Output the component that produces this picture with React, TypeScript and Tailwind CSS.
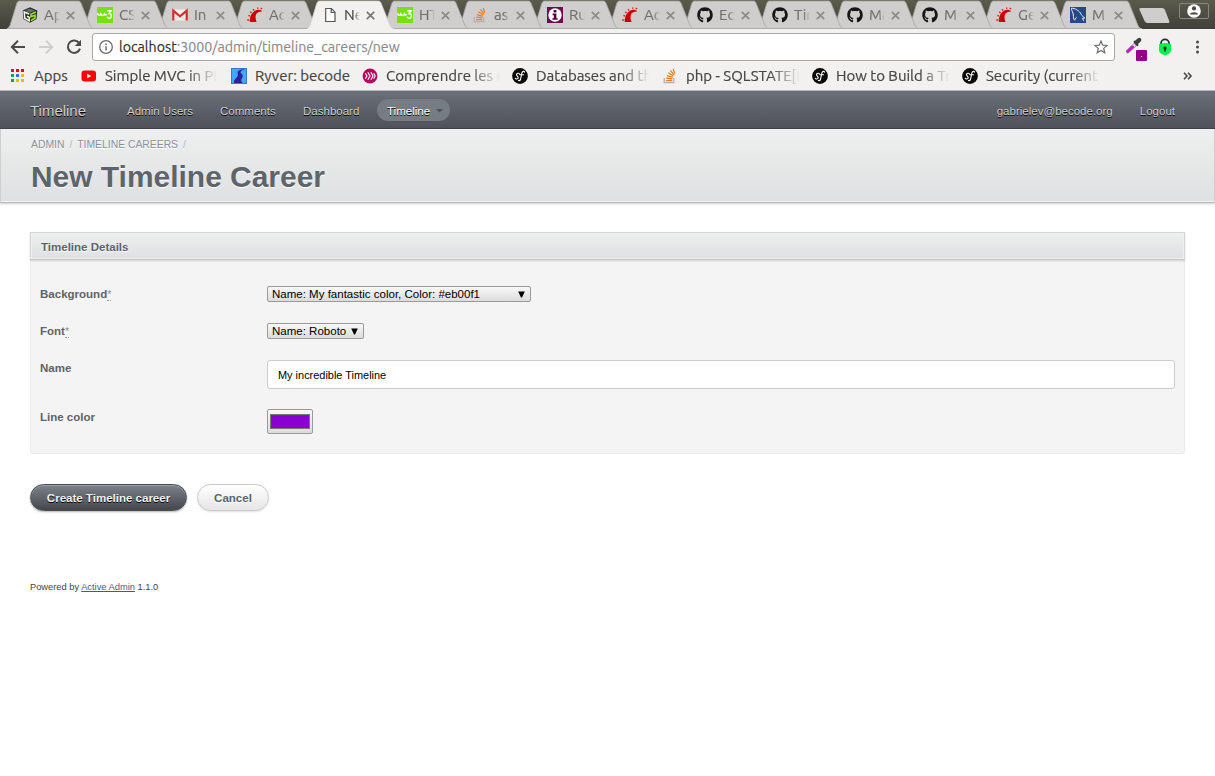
import type { ReactNode } from "react";
import { FaGithub } from "react-icons/fa";

const CHROME_FONT = "font-['Ubuntu','Noto_Sans',sans-serif]";

/* ---------- favicons ---------- */

function CubeIcon() {
  return (
    <svg width="16" height="16" viewBox="0 0 16 16">
      <path d="M8 0.3 15.3 3.6 14.6 12 8 15.8 1.4 12 0.7 3.6Z" fill="#2b2b2b" />
      <path d="M8 1.5 13 3.7 8 5.8 3 3.7Z" fill="#6b6b6b" />
      <path d="M7.2 7 2.2 5 2.8 11.2 7.2 13.8V10.2L5 9.3" fill="none" stroke="#f4f4f4" strokeWidth="1.5" />
      <path d="M13.8 5 9 7.2V9.8L13 8.2V11L8.8 13.6" fill="none" stroke="#9be021" strokeWidth="1.6" />
    </svg>
  );
}

function W3Icon() {
  return (
    <svg width="16" height="16" viewBox="0 0 16 16">
      <rect width="16" height="16" fill="#77e010" />
      <path d="M0.6 6.2C1 9 3 9 3.8 6.9 4.6 9 6.8 9 7.4 7 8 8.2 8.8 8.2 9.6 7.2" fill="none" stroke="#fff" strokeWidth="1.4" />
      <path d="M10.2 3.7H14L12 6.6C14.8 6.4 15 9.8 13.4 10.8 12.2 11.6 10.6 11.2 10 9.8" fill="none" stroke="#fff" strokeWidth="1.4" />
    </svg>
  );
}

function GmailIcon() {
  return (
    <svg width="16" height="16" viewBox="0 0 16 16">
      <rect x="1" y="2.5" width="14" height="11" fill="#eee" />
      <path d="M1.3 13.5V3.6L8 9.3 14.7 3.6V13.5" fill="none" stroke="#d3302a" strokeWidth="2.2" />
      <path d="M3 13.5 6.5 9.2M13 13.5 9.5 9.2" stroke="#ccc" strokeWidth="0.8" />
    </svg>
  );
}

function RailsIcon() {
  return (
    <svg width="16" height="16" viewBox="0 0 16 16">
      <path d="M2.8 15C2.4 9.5 5.4 3.4 11 2.8 13 2.6 14.4 3.2 15.2 4.6 11.6 4.6 9.4 5.8 8.7 8.4 8.3 10.4 8.6 12.6 9.6 15Z" fill="#cc0000" />
      <path d="M10 1.2H11.4M13.6 1 15.2 1.8M6 2.2 7.2 3.6M3.2 4.8 4.6 5.9M1.4 8.4 3 9.1M0.2 13H2.2" stroke="#d42020" strokeWidth="1.3" />
    </svg>
  );
}

function PageIcon() {
  return (
    <svg width="16" height="16" viewBox="0 0 16 16">
      <path d="M3.7 1.5H9.4L13 5.2V14.5H3.7ZM9.2 1.8V5.5H12.8" fill="#fff" stroke="#555" strokeWidth="1.2" />
    </svg>
  );
}

function StackIcon() {
  return (
    <svg width="16" height="16" viewBox="0 0 16 16">
      <path d="M2.2 10V14.6H11.8V10" fill="none" stroke="#b3b0ad" strokeWidth="1.3" />
      <path d="M4 12.6H10.2M4.2 10.2 10.3 10.9M4.9 7.6 10.7 9.4M6.3 4.8 11.2 8M8.4 2.4 12 6.8M11.2 1 12.7 5.6" stroke="#f07d1c" strokeWidth="1.3" />
    </svg>
  );
}

function InfoSquareIcon() {
  return (
    <svg width="16" height="16" viewBox="0 0 16 16">
      <rect width="16" height="16" fill="#6d0a54" />
      <circle cx="8" cy="8" r="6.7" fill="#fff" />
      <path d="M5.6 6.6H9.4V11.2H10.6V12.8H5.4V11.2H6.8V8.2H5.6ZM6.6 3H9.4V5.6H6.6Z" fill="#4a0638" />
    </svg>
  );
}

function GithubIcon() {
  return <FaGithub size={16} color="#161616" />;
}

function DolphinIcon() {
  return (
    <svg width="16" height="16" viewBox="0 0 16 16">
      <rect width="16" height="16" fill="#264788" />
      <path d="M1.5 1.2C4.5 1 9.5 3.5 11.2 7.4 11.8 9 13.5 9.8 14.8 11L12.3 11.4 14 14M1.5 1.2C1.2 3.4 3.2 5 3.3 8 3.4 10 3.6 12.4 4.8 13.2 5.4 12 5.6 10.6 6.6 10.4" fill="none" stroke="#e8eef8" strokeWidth="1" />
    </svg>
  );
}

function YoutubeIcon() {
  return (
    <svg width="16" height="16" viewBox="0 0 16 16">
      <rect x="0.5" y="2.5" width="14.5" height="11" rx="3" fill="#f00" />
      <path d="M6.2 5.8 10.2 8 6.2 10.2Z" fill="#fff" />
    </svg>
  );
}

function RyverIcon() {
  return (
    <svg width="16" height="16" viewBox="0 0 16 16">
      <rect x="0.5" y="0.5" width="15" height="15" fill="#41a8f8" stroke="#3b78c8" strokeWidth="1" />
      <path d="M14 1.2C10 1 6.4 2.4 6.6 4.6 6.8 6.8 7.4 8 4.8 10.4 3 12 2.6 13.6 3.2 15H11.8C9.6 13 10 11.8 11.2 10 12.6 7.6 11.4 6.4 10 5.2 8.6 3.8 10.6 2.2 14 1.2Z" fill="#2f1fa0" />
    </svg>
  );
}

function MagentaIcon() {
  return (
    <svg width="16" height="16" viewBox="0 0 16 16">
      <circle cx="8" cy="8" r="7.4" fill="#b5075f" />
      <path d="M3.2 5.2 5 8 3.2 10.8M5.8 4.2 8 8 5.8 11.8M8.8 4.2 11 8 8.8 11.8M11.6 5.2 13.2 8 11.6 10.8" fill="none" stroke="#fff" strokeWidth="1.1" />
    </svg>
  );
}

function SymfonyIcon() {
  return (
    <svg width="16" height="16" viewBox="0 0 16 16">
      <circle cx="8" cy="8" r="7.9" fill="#0b0b0b" />
      <path d="M7.4 6.1C7.4 4.8 4.6 4.8 4.5 6.6 4.5 8 6.4 8.2 6.2 9.8 6 11.4 3.6 11.4 3.4 10.2M12.6 4.2C12.4 2.8 10.4 3 9.8 5.2L8.6 11C8.2 12.6 7 13 6.4 12.4M8.2 6.8H11.6" fill="none" stroke="#fff" strokeWidth="1.1" strokeLinecap="round" />
    </svg>
  );
}

function AppsIcon() {
  const colors = ["#f00", "#f00", "#f00", "#1a9c4c", "#4666f6", "#f3b800", "#1a9c4c", "#f3b800", "#f3b800"];
  return (
    <svg width="14" height="14" viewBox="0 0 14 14">
      {colors.map((c, i) => (
        <rect key={i} x={1 + (i % 3) * 5} y={Math.floor(i / 3) * 5} width="3" height="3" fill={c} />
      ))}
    </svg>
  );
}

/* ---------- browser chrome ---------- */

type TabInfo = { title: string; icon: () => ReactNode; active?: boolean };

const tabs: TabInfo[] = [
  { title: "Ap", icon: CubeIcon },
  { title: "CS", icon: W3Icon },
  { title: "In", icon: GmailIcon },
  { title: "Ac", icon: RailsIcon },
  { title: "Ne", icon: PageIcon, active: true },
  { title: "HT", icon: W3Icon },
  { title: "as", icon: StackIcon },
  { title: "Ru", icon: InfoSquareIcon },
  { title: "Ac", icon: RailsIcon },
  { title: "Ec", icon: GithubIcon },
  { title: "Tin", icon: GithubIcon },
  { title: "Ma", icon: GithubIcon },
  { title: "M", icon: GithubIcon },
  { title: "Ge", icon: RailsIcon },
  { title: "M", icon: DolphinIcon },
];

function Tab({ tab, index }: { tab: TabInfo; index: number }) {
  const Icon = tab.icon;
  return (
    <div
      className={`relative flex h-[29px] shrink-0 items-center pl-[15px] ${index < 12 ? "w-[75px]" : "w-[74px]"}`}
      style={{ zIndex: tab.active ? 30 : 20 - index }}
    >
      <svg className="absolute top-0 left-0" width="88" height="29" viewBox="0 0 88 29">
        <path
          d="M0 29C1.5 28 2.5 26.5 3.2 25L9.6 4C10.4 2 11 1 12.5 1H71.5C73 1 73.6 2 74.4 4L82.8 25C83.6 27 85 28.4 87 29Z"
          fill={tab.active ? "#f2f1f0" : "#d0cecd"}
        />
        <path
          d="M0 28.8C1.5 28 2.5 26.5 3.2 25L9.6 4C10.4 2 11 1 12.5 1H71.5C73 1 73.6 2 74.4 4L82.8 25C83.6 27 85 28.4 87 28.8"
          fill="none"
          stroke={tab.active ? "#d5d4d0" : "#a5a4a0"}
          strokeWidth="0.8"
        />
        {!tab.active && <path d="M0 28.5H87" stroke="#adacaa" />}
      </svg>
      <span className="relative mt-px flex h-4 w-4">
        <Icon />
      </span>
      <span
        className={`relative ml-[6px] w-[16px] overflow-hidden text-[15px] leading-5 whitespace-nowrap [-webkit-text-stroke:0.2px] [mask-image:linear-gradient(to_right,#000_60%,transparent)] ${
          tab.active ? "text-[#4c4c4c]" : "text-[#707070]"
        }`}
      >
        {tab.title}
      </span>
      <svg className="relative mt-px ml-[6px] shrink-0" width="9" height="9" viewBox="0 0 9 9">
        <path d="M0.8 0.8 8.2 8.2M8.2 0.8 0.8 8.2" stroke={tab.active ? "#777" : "#8b8b8b"} strokeWidth="1.7" />
      </svg>
    </div>
  );
}

function TabStrip() {
  return (
    <div className="flex h-[29px] bg-linear-to-b from-[#5b5b4d] to-[#403f39] pl-[7px]">
      {tabs.map((t, i) => (
        <Tab key={i} tab={t} index={i} />
      ))}
      <svg className="ml-[8px] shrink-0" width="36" height="29" viewBox="0 0 36 29">
        <path d="M3.5 8H25Q27 8 28 10L32.4 21.5Q32.8 23 31 23H10.5Q8.5 23 7.6 21L2.4 9.5Q2 8 3.5 8Z" fill="#d0cecd" />
      </svg>
      <div className="mt-[3px] ml-[6px] flex h-4 w-[30px] items-center justify-center rounded-[2px] border border-[#888880]">
        <svg width="14" height="14" viewBox="0 0 14 14">
          <circle cx="7" cy="7" r="6.8" fill="#fff" />
          <circle cx="7" cy="4.4" r="2.1" fill="#4a493f" />
          <path d="M3 10.4C3.2 7.4 10.8 7.4 11 10.4Z" fill="#4a493f" />
        </svg>
      </div>
    </div>
  );
}

function Toolbar() {
  return (
    <div className="flex h-[35px] items-center">
      <svg className="ml-[10px]" width="16" height="16" viewBox="0 0 16 16">
        <path d="M15 8H2M8 1.8 1.8 8 8 14.2" fill="none" stroke="#4b4b4b" strokeWidth="2" />
      </svg>
      <svg className="ml-[12px]" width="16" height="16" viewBox="0 0 16 16">
        <path d="M1 8H14M8 1.8 14.2 8 8 14.2" fill="none" stroke="#cfcecd" strokeWidth="2" />
      </svg>
      <svg className="ml-[12px]" width="16" height="16" viewBox="0 0 16 16">
        <path d="M13.3 4.3A6.2 6.2 0 1 0 14 9.6" fill="none" stroke="#4b4b4b" strokeWidth="2" />
        <path d="M15 0.8V7H8.8Z" fill="#4b4b4b" />
      </svg>
      <div className="ml-[10px] flex h-7 w-[1023px] items-center rounded-[3px] border border-[#a9a9a9] bg-white pl-[6px]">
        <svg width="14" height="14" viewBox="0 0 14 14">
          <circle cx="7" cy="7" r="6.3" fill="none" stroke="#6b6b6b" strokeWidth="1.3" />
          <path d="M7 6.2V10.5M7 3.4V4.9" stroke="#6b6b6b" strokeWidth="1.5" />
        </svg>
        <span className="ml-[6px] text-[14.2px] leading-5 text-[#8a8a8a] [-webkit-text-stroke:0.15px]">
          <span className="text-[#2c2c2c]">localhost</span>:3000/admin/timeline_careers/new
        </span>
        <svg className="mr-[6px] ml-auto" width="14" height="14" viewBox="0 0 14 14">
          <path d="M7 1 8.7 5.2 13.2 5.5 9.7 8.4 10.8 12.8 7 10.4 3.2 12.8 4.3 8.4 0.8 5.5 5.3 5.2Z" fill="none" stroke="#6e6e6e" strokeWidth="1.2" />
        </svg>
      </div>
      <div className="relative ml-[11px] h-6 w-[21px]">
        <svg width="21" height="24" viewBox="0 0 21 24">
          <path d="M1.8 16.4 9.8 9" stroke="#8a8a8a" strokeWidth="3.8" strokeLinecap="round" />
          <path d="M1.9 16.2 9 9.6" stroke="#eedff0" strokeWidth="2.4" />
          <path d="M1.9 16.2 6.6 11.9" stroke="#d012c8" strokeWidth="2.8" strokeLinecap="round" />
          <path d="M8 6.2 12 10.6" stroke="#333" strokeWidth="2" />
          <path d="M10.8 7.2 13.2 5" stroke="#3c4040" strokeWidth="4.4" strokeLinecap="round" />
        </svg>
        <div className="absolute top-[15px] left-[10px] h-[11px] w-[11px] rounded-[1px] bg-[#94008c]" />
        <div className="absolute top-[21px] left-[15px] h-px w-px bg-white" />
      </div>
      <svg className="ml-[10px]" width="16" height="18" viewBox="0 0 16 18">
        <path d="M4 7V5.4A4 4 0 0 1 12 5.4V7" fill="none" stroke="#27303a" strokeWidth="1.8" />
        <path d="M2 6.2Q8 4 14 6.2V13.1Q12.6 16.2 8 17.4 3.4 16.2 2 13.1Z" fill="#08f04c" />
        <circle cx="8" cy="10" r="1.6" fill="#102818" />
        <path d="M7.3 10.6H8.7V13.6H7.3Z" fill="#102818" />
      </svg>
      <svg className="ml-[22px]" width="5" height="14" viewBox="0 0 5 14">
        <circle cx="2.5" cy="2" r="1.5" fill="#4b4b4b" />
        <circle cx="2.5" cy="7" r="1.5" fill="#4b4b4b" />
        <circle cx="2.5" cy="12" r="1.5" fill="#4b4b4b" />
      </svg>
    </div>
  );
}

const bookmarks: { title: string; icon: () => ReactNode; box: string; text: string; fade?: boolean }[] = [
  { title: "Simple MVC in PHP", icon: YoutubeIcon, box: "w-[150px]", text: "ml-2 w-[112px]", fade: true },
  { title: "Ryver: becode", icon: RyverIcon, box: "w-[131px]", text: "ml-2 w-[100px]" },
  { title: "Comprendre les no", icon: MagentaIcon, box: "w-[150px]", text: "ml-2 w-[114px]", fade: true },
  { title: "Databases and the", icon: SymfonyIcon, box: "w-[150px]", text: "ml-2 w-[114px]", fade: true },
  { title: "php - SQLSTATE[HY", icon: StackIcon, box: "w-[150px]", text: "ml-2 w-[114px]", fade: true },
  { title: "How to Build a Tra", icon: SymfonyIcon, box: "w-[150px]", text: "ml-2 w-[114px]", fade: true },
  { title: "Security (current)", icon: SymfonyIcon, box: "w-[150px]", text: "ml-2 w-[114px]", fade: true },
];

function BookmarkBar() {
  return (
    <div className="flex h-[27px] items-center border-b border-[#b4b4b4] pb-[2px] text-[15px] leading-5 text-[#454545] [-webkit-text-stroke:0.2px]">
      <span className="ml-[10px] flex h-[14px]">
        <AppsIcon />
      </span>
      <span className="ml-[10px] w-[47px]">Apps</span>
      {bookmarks.map((b, i) => {
        const Icon = b.icon;
        return (
          <div key={i} className={`flex shrink-0 items-center ${b.box}`}>
            <Icon />
            <span
              className={`overflow-hidden whitespace-nowrap ${b.text} ${
                b.fade ? "[mask-image:linear-gradient(to_right,#000_74%,transparent)]" : ""
              }`}
            >
              {b.title}
            </span>
          </div>
        );
      })}
      <svg className="ml-[71px]" width="10" height="8" viewBox="0 0 10 8">
        <path d="M1 0.8 4 4 1 7.2M5 0.8 8 4 5 7.2" fill="none" stroke="#444" strokeWidth="1.6" />
      </svg>
    </div>
  );
}

/* ---------- admin page ---------- */

function AdminNav() {
  return (
    <nav className="flex h-[38px] items-center border-b border-[#3f4247] bg-linear-to-b from-[#6b6f78] to-[#4f525a] pt-[2px] pl-[30px] text-[#cdcfd1] [text-shadow:0_1px_0_#000]">
      <span className="w-[97px] text-[14.98px]">Timeline</span>
      <span className="w-[93px]">Admin Users</span>
      <span className="w-[83px]">Comments</span>
      <span className="w-[74px]">Dashboard</span>
      <span className="-mt-px flex h-[22px] w-[73px] items-center rounded-full bg-[#757c84] pt-px pl-[10px] text-white">
        Timeline
        <svg className="ml-[6px]" width="7" height="4" viewBox="0 0 7 4">
          <path d="M0 0H7L3.5 3.5Z" fill="#4d5158" />
        </svg>
      </span>
      <span className="ml-auto">gabrielev@becode.org</span>
      <span className="mr-[40px] ml-[27px]">Logout</span>
    </nav>
  );
}

function TitleBar() {
  return (
    <header className="h-[74px] border border-t-0 border-[#cfcfcf] border-b-[#bababa] bg-linear-to-b from-[#efefef] via-[#e6e8e8] to-[#dfe0e2] px-[30px] pt-[9px] shadow-[0_1px_2px_rgba(0,0,0,0.2),inset_0_-1px_0_#f2f2f2]">
      <div className="flex gap-[5px] text-[10.37px] leading-[14px] text-[#8a90a0] [text-shadow:0_1px_0_#fff]">
        <span>ADMIN</span>
        <span className="text-[#aab2ba]">/</span>
        <span>TIMELINE CAREERS</span>
        <span className="text-[#aab2ba]">/</span>
      </div>
      <h1 className="mt-[7px] text-[29.95px] leading-9 font-bold text-[#5e6469] [text-shadow:0_1px_0_#fff]">New Timeline Career</h1>
    </header>
  );
}

function Row({ label, required, height, children }: { label: string; required?: boolean; height: string; children: ReactNode }) {
  return (
    <div className={`flex items-start ${height}`}>
      <label className="w-[227px] leading-4 font-bold text-[#5e6469]">
        {label}
        {required && (
          <abbr className="border-b border-dotted border-[#999] text-[10.4px] leading-none font-normal text-[#8c8c8c] no-underline">*</abbr>
        )}
      </label>
      {children}
    </div>
  );
}

function Select({ value, width }: { value: string; width: string }) {
  return (
    <div
      className={`flex h-4 items-center justify-between rounded-[2px] border border-[#9a9a9a] bg-linear-to-b from-[#f8f8f8] to-[#dcdcdc] pr-[5px] pl-1 whitespace-nowrap text-black ${width}`}
    >
      {value}
      <svg width="7" height="7" viewBox="0 0 7 7">
        <path d="M0.2 0.5H6.8L4 6.5H3Z" fill="#000" />
      </svg>
    </div>
  );
}

function TimelineForm() {
  return (
    <main className="px-[30px] pt-[29px]">
      <section className="rounded-b-[4px] bg-[#f4f4f4] shadow-[inset_0_0_0_1px_#ebebeb]">
        <h3 className="flex h-[28px] items-center border border-[#d6d6d6] border-b-[#c4c4c4] bg-linear-to-b from-[#efefef] via-[#e6e8e8] to-[#dfe0e2] pt-px pl-[10px] font-bold text-[#5e6469] shadow-[0_1px_2px_rgba(0,0,0,0.15),inset_0_0_0_1px_#f0f0f0] [text-shadow:0_1px_0_#fff]">
          Timeline Details
        </h3>
        <div className="h-[194px] px-[10px] pt-[26px]">
          <Row label="Background" required height="h-[37px]">
            <Select value="Name: My fantastic color, Color: #eb00f1" width="w-[264px]" />
          </Row>
          <Row label="Font" required height="h-[37px]">
            <Select value="Name: Roboto" width="w-[97px]" />
          </Row>
          <Row label="Name" height="h-[49px]">
            <div className="flex h-[29px] flex-1 items-center rounded-[3px] border border-[#c9cbd6] bg-white pl-[10px] text-[10.94px] text-black">
              My incredible Timeline
            </div>
          </Row>
          <Row label="Line color" height="h-[25px]">
            <div className="h-[25px] w-[46px] rounded-[2px] border border-[#9a9a9a] bg-linear-to-b from-[#f8f8f8] to-[#dcdcdc] px-[2px] py-1">
              <div className="h-[15px] border border-[#777] bg-[#8a00d0]" />
            </div>
          </Row>
        </div>
      </section>
      <div className="mt-[30px] flex gap-[10px] font-bold">
        <button className="h-[27px] w-[157px] rounded-full border border-[#484e53] bg-linear-to-b from-[#7d828b] to-[#45474d] whitespace-nowrap text-[#efefef] shadow-[0_1px_2px_rgba(0,0,0,0.3),inset_0_1px_1px_rgba(255,255,255,0.25)] [text-shadow:0_1px_0_#000]">
          Create Timeline career
        </button>
        <button className="h-[27px] w-[72px] rounded-full border border-[#c9c9c9] bg-linear-to-b from-white to-[#e6e6e6] text-[#5e6469] shadow-[0_1px_2px_rgba(0,0,0,0.12)] [text-shadow:0_1px_0_#fff]">
          Cancel
        </button>
      </div>
      <footer className="mt-[69px] text-[9.3px] leading-[14px] text-[#444]">
        Powered by <a className="text-[#3f5b94] underline">Active Admin</a> 1.1.0
      </footer>
    </main>
  );
}

export default function App() {
  return (
    <div className="h-[776px] w-[1215px] overflow-hidden bg-white">
      <div className={`h-[91px] bg-[#f2f1f0] ${CHROME_FONT}`}>
        <TabStrip />
        <Toolbar />
        <BookmarkBar />
      </div>
      <div className="font-['Liberation_Sans',Arial,sans-serif] text-[11.52px] leading-4">
        <AdminNav />
        <TitleBar />
        <TimelineForm />
      </div>
    </div>
  );
}
